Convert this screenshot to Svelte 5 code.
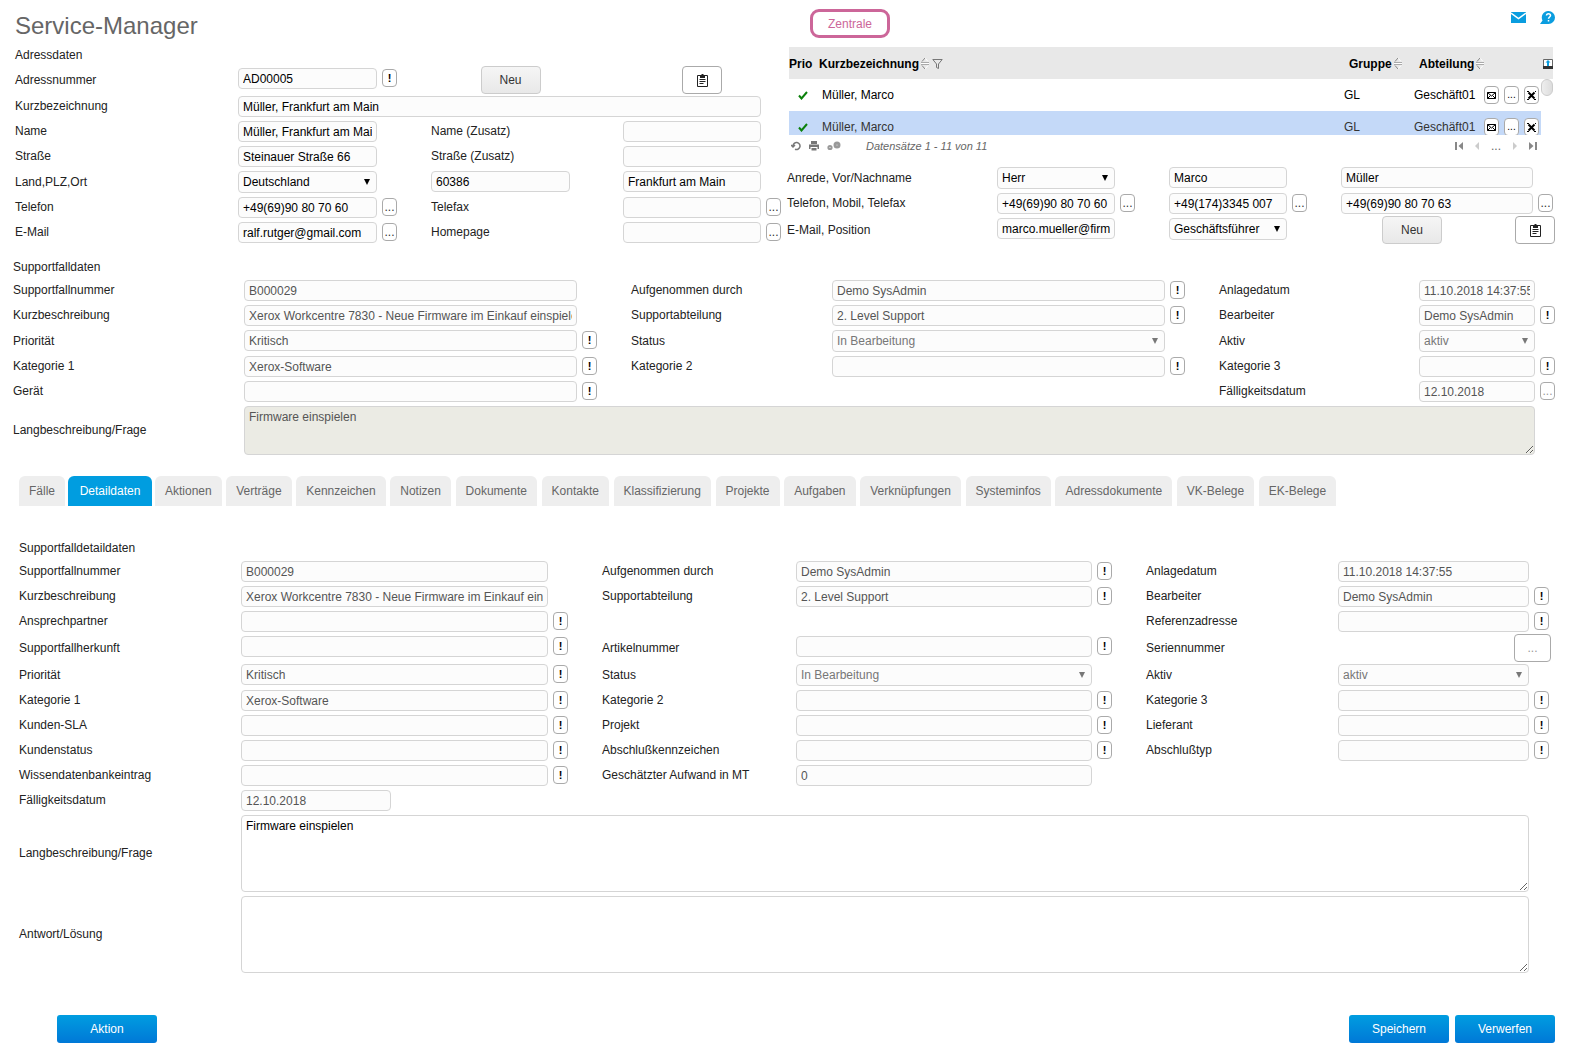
<!--
	Service-Manager
	Address, contact and support case form with a tabbed detail area
-->
<script lang="ts">
	interface Field {
		label?: string;
		value?: string;
		type?: 'text' | 'select' | 'area' | 'more' | 'none';
		button?: '!' | '...';
		muted?: boolean;
		short?: boolean;
		open?: boolean;
	}

	const contacts = [
		{ name: 'Müller, Marco', group: 'GL', department: 'Geschäft01', active: false },
		{ name: 'Müller, Marco', group: 'GL', department: 'Geschäft01', active: true }
	];

	const caseRows: Field[][] = [
		[
			{ label: 'Supportfallnummer', value: 'B000029' },
			{ label: 'Aufgenommen durch', value: 'Demo SysAdmin', button: '!' },
			{ label: 'Anlagedatum', value: '11.10.2018 14:37:55' }
		],
		[
			{ label: 'Kurzbeschreibung', value: 'Xerox Workcentre 7830 - Neue Firmware im Einkauf einspielen' },
			{ label: 'Supportabteilung', value: '2. Level Support', button: '!' },
			{ label: 'Bearbeiter', value: 'Demo SysAdmin', button: '!' }
		],
		[
			{ label: 'Priorität', value: 'Kritisch', button: '!' },
			{ label: 'Status', value: 'In Bearbeitung', type: 'select' },
			{ label: 'Aktiv', value: 'aktiv', type: 'select' }
		],
		[
			{ label: 'Kategorie 1', value: 'Xerox-Software', button: '!' },
			{ label: 'Kategorie 2', button: '!' },
			{ label: 'Kategorie 3', button: '!' }
		],
		[
			{ label: 'Gerät', button: '!' },
			{ type: 'none' },
			{ label: 'Fälligkeitsdatum', value: '12.10.2018', button: '...', muted: true }
		],
		[{ label: 'Langbeschreibung/Frage', value: 'Firmware einspielen', type: 'area' }]
	];

	const detailRows: Field[][] = [
		[
			{ label: 'Supportfallnummer', value: 'B000029' },
			{ label: 'Aufgenommen durch', value: 'Demo SysAdmin', button: '!' },
			{ label: 'Anlagedatum', value: '11.10.2018 14:37:55' }
		],
		[
			{ label: 'Kurzbeschreibung', value: 'Xerox Workcentre 7830 - Neue Firmware im Einkauf einspielen' },
			{ label: 'Supportabteilung', value: '2. Level Support', button: '!' },
			{ label: 'Bearbeiter', value: 'Demo SysAdmin', button: '!' }
		],
		[
			{ label: 'Ansprechpartner', button: '!' },
			{ type: 'none' },
			{ label: 'Referenzadresse', button: '!' }
		],
		[
			{ label: 'Supportfallherkunft', button: '!' },
			{ label: 'Artikelnummer', button: '!' },
			{ label: 'Seriennummer', type: 'more' }
		],
		[
			{ label: 'Priorität', value: 'Kritisch', button: '!' },
			{ label: 'Status', value: 'In Bearbeitung', type: 'select' },
			{ label: 'Aktiv', value: 'aktiv', type: 'select' }
		],
		[
			{ label: 'Kategorie 1', value: 'Xerox-Software', button: '!' },
			{ label: 'Kategorie 2', button: '!' },
			{ label: 'Kategorie 3', button: '!' }
		],
		[
			{ label: 'Kunden-SLA', button: '!' },
			{ label: 'Projekt', button: '!' },
			{ label: 'Lieferant', button: '!' }
		],
		[
			{ label: 'Kundenstatus', button: '!' },
			{ label: 'Abschlußkennzeichen', button: '!' },
			{ label: 'Abschlußtyp', button: '!' }
		],
		[
			{ label: 'Wissendatenbankeintrag', button: '!' },
			{ label: 'Geschätzter Aufwand in MT', value: '0' },
			{ type: 'none' }
		],
		[{ label: 'Fälligkeitsdatum', value: '12.10.2018', short: true }, { type: 'none' }, { type: 'none' }],
		[{ label: 'Langbeschreibung/Frage', value: 'Firmware einspielen', type: 'area', open: true }],
		[{ label: 'Antwort/Lösung', value: '', type: 'area', open: true }]
	];

	const tabs = [
		'Fälle',
		'Detaildaten',
		'Aktionen',
		'Verträge',
		'Kennzeichen',
		'Notizen',
		'Dokumente',
		'Kontakte',
		'Klassifizierung',
		'Projekte',
		'Aufgaben',
		'Verknüpfungen',
		'Systeminfos',
		'Adressdokumente',
		'VK-Belege',
		'EK-Belege'
	];

	let activeTab = $state('Detaildaten');
</script>

{#snippet mini(text: string, label: string, muted = false)}
	<button type="button" class="mini" class:bang={text === '!'} class:muted aria-label={label}>{text}</button>
{/snippet}

{#snippet entry(id: string, label: string, value: string, button = '')}
	<div class="field">
		<input {id} type="text" aria-label={label} {value} />
		{#if button}{@render mini(button, label + ' öffnen')}{/if}
	</div>
{/snippet}

{#snippet clipboard()}
	<svg width="11" height="13" viewBox="0 0 11 13" fill="none" stroke="#222" aria-hidden="true">
		<path d="M.5 1.500h10v11H.5z" />
		<path fill="#222" stroke="none" d="M3 1h1.500V0h2v1H8v3H3z" />
		<path d="M2.500 5.500h6M2.500 7.500h6M2.500 9.500h4" />
	</svg>
{/snippet}

{#snippet sort()}
	<svg class="sort" width="8" height="12" viewBox="0 0 8 12" fill="none" aria-hidden="true">
		<path stroke="#fff" d="M0 6.500h8M4 1l3 3.500M4 12l3-3.500" />
		<path stroke="#aaa" d="M0 5.500h8M0 7.500h8" />
		<path stroke="#888" d="M1 4.500L4 1M1 8.500L4 12" />
	</svg>
{/snippet}

{#snippet rows(prefix: string, list: Field[][])}
	{#each list as row, r}
		{#each row as item, c}
			{@const id = `${prefix}-${r}-${c}`}
			{#if item.type === 'none'}
				<span class="blank col{c}"></span>
			{:else if item.type === 'more'}
				<span class="label col{c}">{item.label}</span>
				<div class="field more">
					<button type="button" class="square" aria-label={item.label + ' öffnen'}>...</button>
				</div>
			{:else}
				<label class="label col{c}" for={id}>{item.label}</label>
				<div class="field" class:wide={item.type === 'area'}>
					{#if item.type === 'select'}
						<select {id} disabled><option>{item.value}</option></select>
					{:else if item.type === 'area'}
						<textarea {id} class:open={item.open} disabled={!item.open} value={item.value}></textarea>
					{:else}
						<input {id} type="text" class:short={item.short} readonly value={item.value ?? ''} />
					{/if}
					{#if item.button}{@render mini(item.button, item.label + ' öffnen', item.muted)}{/if}
				</div>
			{/if}
		{/each}
	{/each}
{/snippet}

<main class="page">
	<div class="top">
		<section class="address">
			<h1>Service-Manager</h1>
			<h2>Adressdaten</h2>
			<div class="address-grid">
				<label class="label" for="a-nr">Adressnummer</label>
				{@render entry('a-nr', 'Adressnummer', 'AD00005', '!')}
				<div class="center col-b"><button type="button" class="new">Neu</button></div>
				<div class="center col-c">
					<button type="button" class="clip" aria-label="Adresse kopieren">{@render clipboard()}</button>
				</div>

				<label class="label" for="a-kurz">Kurzbezeichnung</label>
				<div class="field wide"><input id="a-kurz" type="text" value="Müller, Frankfurt am Main" /></div>

				<label class="label" for="a-name">Name</label>
				{@render entry('a-name', 'Name', 'Müller, Frankfurt am Main')}
				<label class="label col-b" for="a-name2">Name (Zusatz)</label>
				<div class="col-c">{@render entry('a-name2', 'Name (Zusatz)', '')}</div>

				<label class="label" for="a-str">Straße</label>
				{@render entry('a-str', 'Straße', 'Steinauer Straße 66')}
				<label class="label col-b" for="a-str2">Straße (Zusatz)</label>
				<div class="col-c">{@render entry('a-str2', 'Straße (Zusatz)', '')}</div>

				<label class="label" for="a-land">Land,PLZ,Ort</label>
				<div class="field"><select id="a-land"><option>Deutschland</option></select></div>
				<div class="col-b">{@render entry('a-plz', 'PLZ', '60386')}</div>
				<div class="col-c">{@render entry('a-ort', 'Ort', 'Frankfurt am Main')}</div>

				<label class="label" for="a-tel">Telefon</label>
				{@render entry('a-tel', 'Telefon', '+49(69)90 80 70 60', '...')}
				<label class="label col-b" for="a-fax">Telefax</label>
				<div class="col-c">{@render entry('a-fax', 'Telefax', '', '...')}</div>

				<label class="label" for="a-mail">E-Mail</label>
				{@render entry('a-mail', 'E-Mail', 'ralf.rutger@gmail.com', '...')}
				<label class="label col-b" for="a-web">Homepage</label>
				<div class="col-c">{@render entry('a-web', 'Homepage', '', '...')}</div>
			</div>
		</section>

		<section class="contact">
			<div class="contact-head">
				<button type="button" class="central">Zentrale</button>
				<div class="links">
					<a href="#mail" aria-label="Nachricht">
						<svg width="15" height="11" viewBox="0 0 15 11" aria-hidden="true">
							<path fill="#0a9ddf" d="M0 0h15v11H0z" />
							<path fill="none" stroke="#fff" stroke-width="1.500" d="M0 1l7.500 5.500L15 1" />
						</svg>
					</a>
					<a href="#help" aria-label="Hilfe">
						<svg width="15" height="13" viewBox="0 0 15 13" aria-hidden="true">
							<path fill="#0a9ddf" d="M8.500 0a6.500 6.500 0 1 1 0 13H0l2.500-3.500A6.500 6.500 0 0 1 8.500 0z" />
							<path fill="none" stroke="#fff" stroke-width="1.500" d="M6.500 4.500c0-2.500 4-2.500 4 0 0 1.500-2 1.500-2 3.300M8.500 9v1.500" />
						</svg>
					</a>
				</div>
			</div>

			<div class="list">
				<table>
					<thead>
						<tr>
							<th class="c-prio">Prio</th>
							<th>
								Kurzbezeichnung{@render sort()}
								<svg class="filter" width="11" height="10" viewBox="0 0 11 10" fill="none" stroke="#777" aria-hidden="true">
									<path d="M.8.500h9.400L6.500 5v4.500l-2-1V5z" />
								</svg>
							</th>
							<th class="c-group">Gruppe{@render sort()}</th>
							<th class="c-dep">Abteilung{@render sort()}</th>
							<th class="c-act"></th>
							<th class="c-end">
								<svg width="10" height="10" viewBox="0 0 10 10" aria-hidden="true">
									<path fill="#fff" stroke="#666" d="M.5 8V.5h9V8" />
									<path fill="#0a9ddf" d="M5 1l2.500 2.500H6V7H4V3.500H2.500z" />
									<path fill="#333" d="M0 7h10v3H0z" />
								</svg>
							</th>
						</tr>
					</thead>
					<tbody>
						{#each contacts as contact}
							<tr class:active={contact.active}>
								<td class="check">
									<svg width="10" height="9" viewBox="0 0 10 9" fill="none" stroke="#0b800b" stroke-width="2" aria-hidden="true">
										<path d="M1 4.500l2.500 3L9 1" />
									</svg>
								</td>
								<td class="name">{contact.name}</td>
								<td>{contact.group}</td>
								<td>{contact.department}</td>
								<td>
									<div class="actions">
										<button type="button" class="mini" aria-label="Mail senden">
											<svg width="9" height="7" viewBox="0 0 9 7" fill="none" stroke="#000" aria-hidden="true">
												<path d="M.5.500h8v6h-8zM.5.500l4 3.500 4-3.500M.5 6.500l3-3M8.500 6.500l-3-3" />
											</svg>
										</button>
										{@render mini('...', 'Kontakt öffnen')}
										<button type="button" class="mini" aria-label="Kontakt löschen">
											<svg width="9" height="9" viewBox="0 0 9 9" fill="none" stroke="#000" aria-hidden="true">
												<path stroke-width="2" d="M1.500 1.500l6 6M7.500 1.500l-6 6" />
												<path d="M0 .5h2M8 .5h1M0 8.500h2M7 8.500h2" />
											</svg>
										</button>
									</div>
								</td>
								<td class="end"></td>
							</tr>
						{/each}
					</tbody>
				</table>
				<span class="thumb"></span>
			</div>

			<div class="list-foot">
				<div class="tools">
					<button type="button" aria-label="Aktualisieren">
						<svg width="10" height="10" viewBox="0 0 10 10" fill="none" stroke="#777" stroke-width="1.500" aria-hidden="true">
							<path d="M2 5a3.500 3.500 0 1 1 2 3.200M0 4l2 2 2-2" />
						</svg>
					</button>
					<button type="button" aria-label="Drucken">
						<svg width="10" height="10" viewBox="0 0 10 10" fill="#777" aria-hidden="true">
							<path d="M2 0h6v3H2zM0 3.500h10V8H8.500V6h-7v2H0zM2.500 7h5v2.500h-5z" />
						</svg>
					</button>
					<button type="button" aria-label="Einstellungen">
						<svg width="14" height="10" viewBox="0 0 14 10" fill="none" stroke="#999" aria-hidden="true">
							<circle cx="3" cy="6.500" r="1.600" stroke-width="2" />
							<circle cx="10" cy="4" r="2" stroke-width="3" />
						</svg>
					</button>
				</div>
				<em>Datensätze 1 - 11 von 11</em>
				<nav aria-label="Seiten">
					<button type="button" aria-label="Erste Seite">
						<svg width="8" height="8" viewBox="0 0 8 8" fill="#888"><path d="M0 0h2v8H0zM8 0v8L3.500 4z" /></svg>
					</button>
					<button type="button" aria-label="Vorherige Seite">
						<svg width="4" height="8" viewBox="0 0 4 8" fill="#ccc"><path d="M4 0v8L0 4z" /></svg>
					</button>
					<span>...</span>
					<button type="button" aria-label="Nächste Seite">
						<svg width="4" height="8" viewBox="0 0 4 8" fill="#ccc"><path d="M0 0v8l4-4z" /></svg>
					</button>
					<button type="button" aria-label="Letzte Seite">
						<svg width="8" height="8" viewBox="0 0 8 8" fill="#888"><path d="M6 0h2v8H6zM0 0v8l4.500-4z" /></svg>
					</button>
				</nav>
			</div>

			<div class="contact-grid">
				<label class="label" for="k-anrede">Anrede, Vor/Nachname</label>
				<div class="field"><select id="k-anrede"><option>Herr</option></select></div>
				<div class="col-b">{@render entry('k-vor', 'Vorname', 'Marco')}</div>
				<div class="col-c">{@render entry('k-nach', 'Nachname', 'Müller')}</div>

				<label class="label" for="k-tel">Telefon, Mobil, Telefax</label>
				{@render entry('k-tel', 'Telefon', '+49(69)90 80 70 60', '...')}
				<div class="col-b">{@render entry('k-mobil', 'Mobil', '+49(174)3345 007', '...')}</div>
				<div class="col-c">{@render entry('k-fax', 'Telefax', '+49(69)90 80 70 63', '...')}</div>

				<label class="label" for="k-mail">E-Mail, Position</label>
				{@render entry('k-mail', 'E-Mail', 'marco.mueller@firma.de')}
				<div class="field col-b">
					<select aria-label="Position"><option>Geschäftsführer</option></select>
				</div>
				<div class="contact-actions col-c">
					<button type="button" class="new">Neu</button>
					<button type="button" class="clip" aria-label="Kontakt kopieren">{@render clipboard()}</button>
				</div>
			</div>
		</section>
	</div>

	<section class="case">
		<h2>Supportfalldaten</h2>
		<div class="case-grid">{@render rows('fall', caseRows)}</div>
	</section>

	<div class="tabs" role="tablist">
		{#each tabs as tab}
			<button
				type="button"
				role="tab"
				class="tab"
				class:active={tab === activeTab}
				aria-selected={tab === activeTab}
				onclick={() => (activeTab = tab)}
			>
				{tab}
			</button>
		{/each}
	</div>

	<section class="detail">
		<h2>Supportfalldetaildaten</h2>
		<div class="detail-grid">{@render rows('detail', detailRows)}</div>
	</section>

	<footer>
		<button type="button" class="primary">Aktion</button>
		<div class="save">
			<button type="button" class="primary">Speichern</button>
			<button type="button" class="primary">Verwerfen</button>
		</div>
	</footer>
</main>

<style>
	:global(body) {
		background: #fff;
	}

	.page,
	.page button,
	.page input,
	.page select,
	.page textarea {
		font-family: Arial, 'Liberation Sans', sans-serif;
		font-size: 12px;
		box-sizing: border-box;
	}

	.page {
		color: #222;
		line-height: 14px;
	}

	h1 {
		margin: 0 0 8px;
		font-size: 24px;
		line-height: 28px;
		font-weight: normal;
		color: #666;
	}

	h2 {
		margin: 0 0 4px;
		font-size: 12px;
		line-height: 14px;
		font-weight: normal;
	}

	.top {
		display: grid;
		grid-template-columns: minmax(0, 1fr) minmax(0, 1fr);
		gap: 6px;
		padding: 0 19px 0 15px;
	}

	.address {
		padding-top: 12px;
	}

	.address-grid,
	.contact-grid,
	.case-grid,
	.detail-grid {
		display: grid;
		align-items: center;
	}

	.address-grid {
		grid-template-columns: 223fr 159fr 34px 159fr 33px 158fr;
	}

	.contact-grid {
		grid-template-columns: 210fr 138fr 34px 138fr 34px 212fr;
	}

	.case-grid {
		grid-template-columns: 231fr 353fr 34px 201fr 353fr 34px 200fr 136fr;
	}

	.detail-grid {
		grid-template-columns: 222fr 327fr 34px 194fr 316fr 34px 192fr 211fr;
	}

	.address-grid > *,
	.contact-grid > *,
	.case-grid > *,
	.detail-grid > * {
		min-width: 0;
	}

	.address-grid .label:not(.col-b),
	.contact-grid .label,
	.label.col0 {
		grid-column: 1;
	}

	.col-b,
	.label.col1 {
		grid-column: 4;
	}

	.col-c {
		grid-column: 6;
	}

	.label.col2 {
		grid-column: 7;
	}

	.blank.col1 {
		grid-column: 4 / 6;
	}

	.blank.col2 {
		grid-column: 7 / 9;
	}

	.label {
		white-space: nowrap;
		padding-bottom: 1px;
	}

	div.col-b,
	div.col-c,
	.field {
		align-self: start;
	}

	.field {
		display: flex;
		align-items: center;
		position: relative;
		padding: 2px 20px 2px 0;
	}

	.field.wide {
		grid-column: 2 / -1;
	}

	.field input,
	.field select,
	.field textarea {
		flex: 1;
		width: 100%;
		min-width: 0;
		margin: 0;
		border: 1px solid #d5d5d5;
		border-radius: 4px;
		background: #fcfcfc;
		color: #000;
	}

	.field input {
		height: 21px;
		padding: 1px 4px 0;
	}

	.field input.short {
		flex: 0 0 150px;
	}

	.field select {
		height: 22px;
		padding: 0 18px 0 4px;
		appearance: none;
		opacity: 1;
		background: #fcfcfc
			url("data:image/svg+xml,%3Csvg xmlns='http://www.w3.org/2000/svg' width='6' height='6'%3E%3Cpath d='M0 0h6L3 6z'/%3E%3C/svg%3E")
			no-repeat right 6px center;
	}

	.field select:disabled {
		color: #777;
		background-image: url("data:image/svg+xml,%3Csvg xmlns='http://www.w3.org/2000/svg' width='6' height='6'%3E%3Cpath fill='%23777' d='M0 0h6L3 6z'/%3E%3C/svg%3E");
	}

	.field input:read-only {
		color: #555;
	}

	.field textarea {
		display: block;
		height: 49px;
		padding: 3px 4px;
		line-height: 14px;
		background: #ebebe4;
		color: #555;
	}

	.field textarea.open {
		height: 77px;
		background: #fff;
		color: #000;
	}

	.mini {
		display: flex;
		align-items: center;
		justify-content: center;
		width: 15px;
		height: 18px;
		padding: 0;
		border: 1px solid #aaa;
		border-radius: 4px;
		background: #fff;
		color: #333;
		line-height: 14px;
	}

	/* the button sits in the reserved strip at the right of its field */
	.field .mini {
		flex: none;
		margin: 0 -20px 1px 5px;
	}

	.page .mini.bang {
		font-size: 11px;
		font-weight: bold;
		color: #000;
	}

	.mini.muted {
		color: #999;
	}

	.square,
	.clip {
		display: flex;
		align-items: center;
		justify-content: center;
		width: 40px;
		height: 28px;
		padding: 0;
		border: 1px solid #aaa;
		border-radius: 4px;
		background: #fff;
	}

	.square {
		width: 37px;
		color: #999;
	}

	.field.more {
		justify-content: flex-end;
		padding: 0;
		margin-right: -2px;
	}

	.new {
		width: 60px;
		height: 28px;
		padding: 0;
		border: 1px solid #ccc;
		border-radius: 4px;
		background: linear-gradient(#f5f5f5, #e8e8e8);
		color: #333;
	}

	.center {
		display: flex;
		justify-content: center;
	}

	.contact-head {
		display: flex;
		justify-content: space-between;
		align-items: flex-start;
		padding: 9px 0 9px 23px;
		margin-right: -2px;
	}

	.central {
		width: 80px;
		height: 29px;
		padding: 0;
		border: 3px solid #cc6699;
		border-radius: 9px;
		background: #fff;
		color: #cc6699;
	}

	.links {
		display: flex;
		align-items: center;
		gap: 14px;
		padding-top: 2px;
	}

	.links svg,
	.tools svg,
	nav svg {
		display: block;
	}

	.list {
		position: relative;
		height: 88px;
		margin-left: 2px;
		overflow: hidden;
	}

	table {
		width: 100%;
		table-layout: fixed;
		border-collapse: collapse;
		color: #000;
	}

	th,
	td {
		box-sizing: border-box;
		height: 32px;
		padding: 0;
		text-align: left;
		white-space: nowrap;
	}

	th {
		padding-top: 2px;
		background: #e8e8e8;
	}

	.c-prio {
		width: 30px;
	}

	.c-group,
	.c-dep {
		width: 70px;
		padding-left: 5px;
	}

	.c-act {
		width: 57px;
	}

	.c-end {
		width: 12px;
	}

	.c-end svg {
		display: block;
		margin-left: auto;
	}

	.sort,
	.filter {
		vertical-align: -1px;
	}

	.sort {
		margin-left: 2px;
	}

	.check svg {
		display: block;
		margin-left: 9px;
	}

	.name {
		padding-left: 3px;
	}

	tr.active td:not(.end) {
		background: #c4d9f8;
		color: #333;
	}

	.actions {
		display: flex;
		gap: 5px;
	}

	.page .actions .mini {
		font-size: 10px;
		color: #000;
	}

	.thumb {
		position: absolute;
		right: 0;
		top: 32px;
		width: 12px;
		height: 17px;
		box-sizing: border-box;
		border: 1px solid #ccc;
		border-radius: 6px;
		background: linear-gradient(90deg, #eee, #ddd);
	}

	.list-foot {
		display: flex;
		align-items: center;
		height: 21px;
		padding: 0 16px 0 4px;
		margin-bottom: 9px;
		color: #666;
	}

	.list-foot em {
		font-size: 11px;
	}

	.list-foot button {
		padding: 0;
		border: 0;
		background: none;
	}

	.tools {
		display: flex;
		gap: 8px;
		margin-right: 25px;
	}

	nav {
		display: flex;
		align-items: center;
		gap: 12px;
		margin-left: auto;
	}

	.contact-actions {
		display: flex;
		justify-content: space-between;
		padding-left: 41px;
		margin-right: -2px;
	}

	.case {
		padding: 15px 17px 0 13px;
	}

	.tabs {
		display: flex;
		justify-content: space-between;
		padding: 19px 15% 0 19px;
	}

	.tab {
		height: 30px;
		padding: 0 10px;
		border: 0;
		border-radius: 6px 6px 0 0;
		background: #eee;
		color: #666;
	}

	.tab.active {
		margin: 0 -2px;
		padding: 0 12px;
		background: #009de0;
		color: #fff;
	}

	.detail {
		padding: 35px 23px 0 19px;
	}

	footer {
		display: flex;
		justify-content: space-between;
		padding: 40px 17px 7px 57px;
	}

	.save {
		display: flex;
		gap: 6px;
	}

	.primary {
		width: 100px;
		height: 28px;
		padding: 0;
		border: 0;
		border-radius: 3px;
		background: linear-gradient(#009de0, #0078d7);
		color: #fff;
	}
</style>
